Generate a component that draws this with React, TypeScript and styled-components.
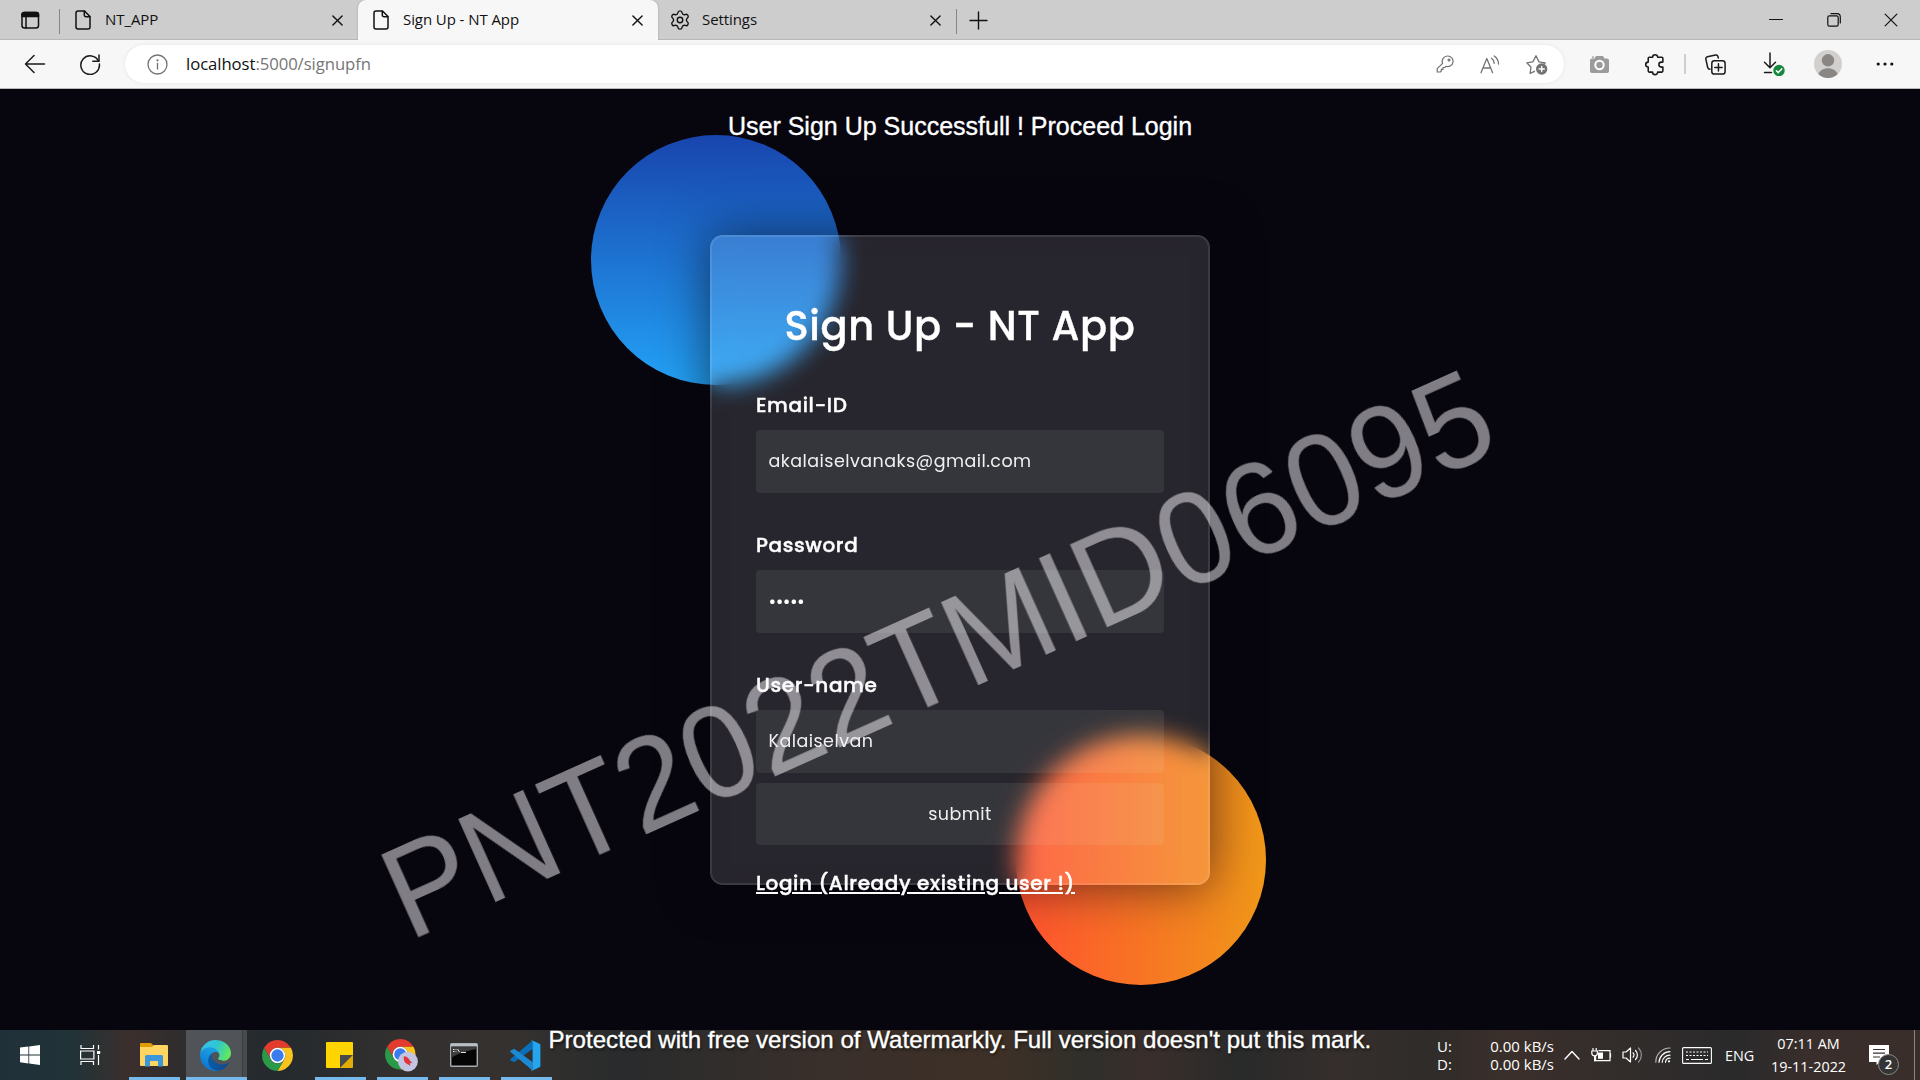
import React from "react";
import styled, { createGlobalStyle, css } from "styled-components";
import { Settings } from "lucide-react";

const uiFont = `"Segoe UI", "Open Sans", "Noto Sans", sans-serif`;
const formFont = `Poppins, Inter, "Open Sans", sans-serif`;
const plainFont = `"Liberation Sans", Arial, sans-serif`;

const GlobalStyle = createGlobalStyle`
  *, *::before, *::after { box-sizing: border-box; }
  body { margin: 0; background: #07050e; overflow: hidden; }
  svg { display: block; flex: none; }
  button { border: 0; padding: 0; background: none; color: inherit; font: inherit; }
`;

const Screen = styled.div`
  position: relative;
  display: grid;
  grid-template-rows: 89px 941px 50px;
  width: 1920px;
  height: 1080px;
  overflow: hidden;
  font-family: ${uiFont};
`;

/* ---------- Browser chrome ---------- */

const BrowserChrome = styled.header`
  display: grid;
  grid-template-rows: 40px 48px;
  background: #f7f7f7;
  border-bottom: 1px solid #b9bab9;
`;

const TabStrip = styled.div`
  display: flex;
  background: #cdcdcd;
  box-shadow: inset 0 -1px #b8b8b8;
  color: #111;
`;

const TabActions = styled.button`
  display: flex;
  align-items: center;
  width: 59px;
  padding-left: 20px;
`;

const StripDivider = styled.span`
  align-self: center;
  width: 1px;
  height: 25px;
  margin-top: 2px;
  background: #858585;
`;

const Tab = styled.div<{ $width: number; $active?: boolean; $start?: number }>`
  display: flex;
  align-items: center;
  width: ${(p) => p.$width}px;
  padding: 0 15px 0 ${(p) => p.$start ?? 15}px;
  ${(p) =>
    p.$active &&
    css`
      background: #f7f7f7;
      border-radius: 8px 8px 0 0;
      box-shadow: 0 0 2px rgba(0, 0, 0, 0.25);
      clip-path: inset(0 -3px 0 -3px);
    `}
`;

const TabTitle = styled.span<{ $gap?: number }>`
  flex: 1;
  margin-left: ${(p) => p.$gap ?? 14}px;
  padding-bottom: 2px;
  font-size: 15px;
  letter-spacing: -0.08px;
  line-height: 30px;
  white-space: nowrap;
`;

const NewTab = styled.button`
  display: flex;
  align-items: center;
  margin-left: 12px;
`;

const WindowButtons = styled.div`
  display: flex;
  align-items: center;
  justify-content: space-between;
  width: 129px;
  margin-left: auto;
  margin-right: 22px;
`;

const Toolbar = styled.div`
  display: flex;
  align-items: center;
  padding: 0 25px 0 24px;
  color: #1b1b1b;
`;

const Reload = styled.button`
  margin: 0 24px 0 33px;
`;

const AddressBar = styled.div`
  display: flex;
  align-items: center;
  width: 1439px;
  height: 38px;
  padding: 0 16px 0 22px;
  border-radius: 19px;
  background: #fff;
  box-shadow: 0 0 4px rgba(0, 0, 0, 0.08);
  color: #737373;
`;

const Url = styled.span`
  flex: 1;
  margin-left: 18px;
  padding-bottom: 2px;
  font-size: 16.7px;
  letter-spacing: -0.06px;
  color: #767676;
`;

const Host = styled.span`
  color: #111;
`;

const AddressActions = styled.div`
  display: flex;
  align-items: center;
  gap: 26px;
`;

const ToolbarAction = styled.button<{ $gap: number }>`
  margin-left: ${(p) => p.$gap}px;
`;

const ToolbarDivider = styled.span`
  width: 2px;
  height: 20px;
  margin-left: 18px;
  background: #cfcfcf;
`;

/* ---------- Sign-up page ---------- */

const Page = styled.main`
  position: relative;
  display: flex;
  flex-direction: column;
  align-items: center;
  padding-top: 22px;
  background: #07050e;
`;

const Message = styled.p`
  position: relative;
  z-index: 2;
  margin: 0;
  font: 25px/30px ${plainFont};
  color: #fff;
  -webkit-text-stroke: 0.35px #fff;
`;

const Shapes = styled.div`
  position: absolute;
  top: 146px;
  left: 691px;
  width: 538px;
  height: 650px;
`;

const Shape = styled.span<{ $variant: "blue" | "orange" }>`
  position: absolute;
  width: 250px;
  height: 250px;
  border-radius: 50%;
  ${(p) =>
    p.$variant === "blue"
      ? css`
          top: -100px;
          left: -100px;
          background: linear-gradient(#1845ad, #23a2f6);
        `
      : css`
          right: -37px;
          bottom: -100px;
          background: linear-gradient(to right, #ff512f, #f09819);
        `}
`;

const Form = styled.form`
  position: relative;
  display: flex;
  flex-direction: column;
  width: 500px;
  height: 650px;
  margin-top: 94px;
  padding: 63px 44px 0;
  border: 2px solid rgba(255, 255, 255, 0.1);
  border-radius: 12.5px;
  background-color: rgba(255, 255, 255, 0.13);
  backdrop-filter: blur(12.5px);
  box-shadow: 0 0 50px rgba(7, 5, 14, 0.6);
  font-family: ${formFont};
  letter-spacing: 0.625px;
  color: #fff;

  > * {
    flex-shrink: 0;
  }
`;

const Title = styled.h3`
  margin: 0 0 1px;
  font-size: 40px;
  font-weight: 500;
  line-height: 52px;
  text-align: center;
  white-space: nowrap;
  -webkit-text-stroke: 0.4px #fff;
`;

const Label = styled.label`
  margin: 37px 0 10px;
  font-size: 20px;
  font-weight: 500;
  line-height: 30px;
  -webkit-text-stroke: 0.4px #fff;
`;

const Field = styled.div<{ $masked?: boolean }>`
  display: flex;
  align-items: center;
  height: 63px;
  padding: 0 12.5px 2px;
  border-radius: 4px;
  background: rgba(235, 255, 235, 0.08);
  font-size: 17.5px;
  letter-spacing: 0.45px;
  color: #f0f0f1;
  ${(p) =>
    p.$masked &&
    css`
      padding-bottom: 1px;
      font-size: 16px;
      font-weight: 600;
      letter-spacing: -0.55px;
      color: #fff;
    `}
`;

const Submit = styled.button`
  height: 62px;
  margin-top: 10px;
  padding-bottom: 1px;
  border-radius: 4px;
  background: rgba(235, 255, 235, 0.08);
  font-size: 17.5px;
  letter-spacing: 0.45px;
  color: #f0f0f1;
`;

const LoginLink = styled.a`
  align-self: flex-start;
  margin-top: 23px;
  font-size: 20px;
  font-weight: 500;
  line-height: 30px;
  text-decoration: underline;
  text-decoration-thickness: 2px;
  text-underline-offset: 2px;
  white-space: nowrap;
  -webkit-text-stroke: 0.4px #fff;
`;

/* ---------- Watermarks ---------- */

const Watermark = styled.div`
  position: absolute;
  z-index: 3;
  top: 834px;
  left: 408.5px;
  font: 127px/127px ${plainFont};
  color: rgba(248, 246, 250, 0.5);
  white-space: nowrap;
  transform: rotate(-24.19deg) scaleY(1.035);
  transform-origin: 0 107.5px;
  pointer-events: none;
`;

const ProtectedNote = styled.div`
  position: absolute;
  z-index: 3;
  top: 1026px;
  left: 548.5px;
  font: 24.1px/28px ${plainFont};
  color: #fff;
  -webkit-text-stroke: 0.35px #fff;
  text-shadow: 1px 2px 3px rgba(0, 0, 0, 0.6);
  white-space: nowrap;
`;

/* ---------- Taskbar ---------- */

const Taskbar = styled.footer`
  display: flex;
  background: linear-gradient(
    to right,
    #20303a 0, #203337 70px, #3b2f2d 130px, #2b2c2e 200px, #242a2e 280px,
    #33302f 400px, #34312f 520px, #292b2c 620px, #392f2b 820px, #3d3026 1000px,
    #302f2b 1090px, #3a2e2b 1150px, #292a2a 1240px, #352e2c 1340px, #2f2c29 1430px,
    #3b2f2b 1510px, #322d2b 1620px, #2a2a2b 1740px, #392e2b 1810px, #3a2e2b 1920px
  );
  color: #fff;
`;

const SystemButton = styled.button`
  display: grid;
  place-items: center;
  width: 60px;
`;

const AppList = styled.div`
  display: flex;
  margin-left: 3px;
`;

const AppButton = styled.button<{ $open?: boolean; $active?: boolean }>`
  display: grid;
  place-items: center;
  width: 62px;
  padding-right: 1px;
  background: ${(p) =>
    p.$active
      ? `linear-gradient(#76b9ed, #76b9ed) 1px 47px / 61px 3px no-repeat,
         linear-gradient(to right, transparent 1px, #505357 1px, #505357 57px, #3a3c3d 57px, #3a3c3d 58px, #484a4c 58px)`
      : p.$open
      ? "linear-gradient(#76b9ed, #76b9ed) 6px 47px / 51px 3px no-repeat"
      : "none"};
`;

const Tray = styled.div`
  display: flex;
  align-items: center;
  width: 483px;
  margin-left: auto;
`;

const NetStats = styled.div`
  display: grid;
  grid-template-columns: auto auto;
  justify-content: space-between;
  width: 117px;
  font-size: 15px;
  line-height: 18px;
`;

const TrayItem = styled.span<{ $gap: number }>`
  display: flex;
  margin-left: ${(p) => p.$gap}px;
`;

const Language = styled.span`
  width: 30px;
  margin-left: 13px;
  font-size: 14.4px;
`;

const Clock = styled.div`
  width: 75px;
  margin-left: 16px;
  font-size: 14.4px;
  line-height: 23px;
  text-align: center;
  white-space: nowrap;
`;

const ShowDesktop = styled.span`
  align-self: stretch;
  width: 1px;
  margin-left: 15px;
  background: #8b8583;
`;

const Notice = styled.span`
  position: relative;
  width: 30px;
  height: 31px;
  margin: 11px 0 0 23px;
`;

const NoticeCount = styled.span`
  position: absolute;
  left: 9px;
  top: 9px;
  display: grid;
  place-items: center;
  width: 21px;
  height: 21px;
  border: 1px solid #8e8c8c;
  border-radius: 50%;
  background: #343434;
  font-size: 13px;
  font-weight: 600;
  line-height: 1;
`;

/* ---------- Icons ---------- */

const Line = ({ w, h, box, sw = 1.5, children }: { w: number; h: number; box?: string; sw?: number; children: React.ReactNode }) => (
  <svg width={w} height={h} viewBox={box ?? `0 0 ${w} ${h}`} fill="none" stroke="currentColor" strokeWidth={sw} strokeLinecap="round" strokeLinejoin="round">
    {children}
  </svg>
);

const TabActionsIcon = () => (
  <Line w={20} h={20}>
    <rect x="2" y="2.5" width="16.5" height="15.5" rx="2.5" />
    <path d="M2 4.5a2 2 0 0 1 2-2h12.5a2 2 0 0 1 2 2V6.5H2z" fill="currentColor" />
    <path d="M6 6v12" />
  </Line>
);
const PageIcon = () => (
  <Line w={16} h={20}>
    <path d="M3 1h6.5L15 6.5V17a2 2 0 0 1-2 2H3a2 2 0 0 1-2-2V3a2 2 0 0 1 2-2z" />
    <path d="M9.3 1.2V5a1.7 1.7 0 0 0 1.7 1.7h3.8" />
  </Line>
);
const CloseIcon = ({ size = 11, sw = 1.4 }) => (
  <Line w={size} h={size} box="0 0 11 11" sw={sw}>
    <path d="M.9.9l9.2 9.2M10.1.9L.9 10.1" />
  </Line>
);
const PlusIcon = () => (
  <Line w={19} h={19} sw={1.4}><path d="M9.5 1v17M1 9.5h17" /></Line>
);
const MinimizeIcon = () => (
  <Line w={14} h={14} sw={1.1}><path d="M.5 6.5h13" /></Line>
);
const RestoreIcon = () => (
  <Line w={14} h={14} sw={1.2}>
    <rect x=".8" y="2.8" width="10.4" height="10.4" rx="1.6" />
    <path d="M4 .7h6a3.3 3.3 0 0 1 3.3 3.3v6" />
  </Line>
);
const BackIcon = () => (
  <Line w={22} h={20}><path d="M20.5 10h-19M10 1.5L1.5 10l8.5 8.5" /></Line>
);
const ReloadIcon = () => (
  <Line w={22} h={22}>
    <path d="M19.6 8.2A9.3 9.3 0 1 0 20.4 11" />
    <path d="M20 2v6.2h-6.2" />
  </Line>
);
const InfoIcon = () => (
  <Line w={21} h={21} sw={1.3}>
    <circle cx="10.5" cy="10.5" r="9.5" />
    <path d="M10.5 9.5v5.6" />
    <circle cx="10.5" cy="6.3" r=".5" fill="currentColor" />
  </Line>
);
const KeyIcon = () => (
  <Line w={18} h={18} sw={1.2}>
    <path d="M11.6 1a5.3 5.3 0 1 1-1.6 10.3L8.8 12.5H7v1.8H5.3V16l-1 1H1.2v-3.3l5.4-5.4A5.3 5.3 0 0 1 11.6 1z" />
    <circle cx="13" cy="5" r=".9" />
  </Line>
);
const ReadAloudIcon = () => (
  <Line w={20} h={19} sw={1.3}>
    <path d="M1 17.7L6.8 3.5l5.8 14.2M3 13h7.6" />
    <path d="M11.5 3.3c1.7 1.2 2.6 3 2.7 5M14.2 1c2.7 1.8 4.2 4.6 4.4 8" />
  </Line>
);
const FavoriteIcon = () => (
  <Line w={22} h={21} sw={1.3}>
    <path d="M8.5 17.3l-4.4 2.2.9-6.3L.8 8.8l6-.9L10 1.8l3 6.1 6.3.9-1.8 1.6" />
    <circle cx="15.7" cy="15" r="5.7" fill="currentColor" stroke="none" />
    <path d="M15.7 12.4v5.2M13.1 15h5.2" stroke="#fff" />
  </Line>
);
const CameraIcon = () => (
  <svg width="19" height="18" viewBox="0 0 19 18">
    <path d="M2 3.5h2.5L6 1h7l1.5 2.5H17a2 2 0 0 1 2 2V16a2 2 0 0 1-2 2H2a2 2 0 0 1-2-2V5.5a2 2 0 0 1 2-2zM2 1.5h2v1.2H2z" fill="#9b9b9b" />
    <circle cx="9.5" cy="10" r="4.2" fill="none" stroke="#fff" strokeWidth="2" />
    <circle cx="9.5" cy="10" r="2.2" fill="#9b9b9b" />
  </svg>
);
const PuzzleIcon = () => (
  <Line w={23} h={23} box="1 1 22 22" sw={1.5}>
    <path d="M7 5h3.2a2.4 2.4 0 0 1 4.8 0H19a1 1 0 0 1 1 1v3.7h-1.4a2.4 2.4 0 0 0 0 4.8H20V18.3a1 1 0 0 1-1 1h-4a2.4 2.4 0 0 1-4.8 0H7a1 1 0 0 1-1-1v-3.8a2.4 2.4 0 0 1 0-4.8V6a1 1 0 0 1 1-1z" />
  </Line>
);
const CollectionsIcon = () => (
  <Line w={21} h={21}>
    <path d="M5 15.2c-1.2 0-2-.6-2.3-1.7L.9 5.4c-.3-1.3.3-2.3 1.5-2.6L10.500 1c1.300-.2 2.200.4 2.500 1.600l.3 1.300" />
    <rect x="6.8" y="6.8" width="13.3" height="13.3" rx="2.6" />
    <path d="M13.450 9.800v7.300M9.800 13.450h7.300" />
  </Line>
);
const DownloadIcon = () => (
  <Line w={22} h={24}>
    <path d="M7 1v14.5M1.5 10.2L7 15.7l5.5-5.5M1.5 20.5h7" />
    <circle cx="16" cy="18.5" r="5.7" fill="#15883e" stroke="none" />
    <path d="M13.4 18.7l1.9 1.9 3.4-3.7" stroke="#fff" />
  </Line>
);
const AvatarIcon = () => (
  <svg width="28" height="28" viewBox="0 0 28 28">
    <circle cx="14" cy="14" r="14" fill="#d2d0ce" />
    <circle cx="14" cy="10.3" r="6.2" fill="#8a8684" />
    <path d="M4.3 24a14 14 0 0 0 19.4 0c-1.5-3.6-5.2-5.8-9.7-5.8S5.8 20.4 4.3 24z" fill="#8a8684" />
  </svg>
);
const DotsIcon = () => (
  <svg width="18" height="6" viewBox="0 0 18 6" fill="#111">
    <circle cx="2.2" cy="3" r="1.6" /><circle cx="9" cy="3" r="1.6" /><circle cx="15.8" cy="3" r="1.6" />
  </svg>
);
const WindowsIcon = () => (
  <svg width="20" height="20" viewBox="0 0 20 20" fill="#fff">
    <path d="M0 2.6l8.4-1.1v8H0zM9.2 1.4L20 0v9.5H9.2zM0 10.4h8.4v8L0 17.3zM9.2 10.4H20V20L9.2 18.5z" />
  </svg>
);
const TaskViewIcon = () => (
  <svg width="21" height="20" viewBox="0 0 21 20" fill="none" stroke="#fff" strokeWidth="1.2">
    <path d="M1 0v3.5h12.5V0M1 20v-3.5h12.5V20M.6 6h13.3v8H.6zM18.5 0v4.5M18.5 10v10" />
    <path d="M17 6h3.2v3H17z" fill="#fff" stroke="none" />
  </svg>
);
const ExplorerIcon = () => (
  <svg width="28" height="24" viewBox="0 0 28 24">
    <path d="M0 1a1 1 0 0 1 1-1h10l2.5 2.5V6H0z" fill="#e19b04" />
    <path d="M0 4h12l2-2h13a1 1 0 0 1 1 1v19a1 1 0 0 1-1 1H1a1 1 0 0 1-1-1z" fill="#ffd561" />
    <path d="M5 23.5v-10a1.5 1.5 0 0 1 1.5-1.5h15a1.5 1.5 0 0 1 1.5 1.5v10h-5v-5.5h-8v5.5z" fill="#3b97dc" />
  </svg>
);
const EdgeIcon = () => (
  <svg width="31" height="31" viewBox="0 0 256 256">
    <defs>
      <linearGradient id="edgeNavy" x1=".2" y1=".6" x2="1" y2=".7"><stop offset="0" stopColor="#0c59a4" /><stop offset="1" stopColor="#114a8b" /></linearGradient>
      <linearGradient id="edgeBlue" x1=".6" y1=".2" x2=".3" y2="1"><stop offset="0" stopColor="#1b9de2" /><stop offset="1" stopColor="#0c6fcd" /></linearGradient>
      <linearGradient id="edgeGreen" x1="0" y1=".3" x2="1" y2=".6"><stop offset="0" stopColor="#35c1f1" /><stop offset=".5" stopColor="#2fc6d0" /><stop offset="1" stopColor="#66eb55" /></linearGradient>
    </defs>
    <path fill="url(#edgeNavy)" d="M231.07 190.54c-3.4 1.8-6.9 3.37-10.51 4.72a101.9 101.9 0 0 1-35.87 6.46c-47.2 0-88.33-32.48-88.33-74.15a31.4 31.4 0 0 1 16.4-27.28c-42.71 1.79-53.69 46.29-53.69 72.35 0 73.69 67.92 81.16 82.55 81.16 7.89 0 19.78-2.3 26.92-4.55l1.3-.44A128.3 128.3 0 0 0 235.9 195.2a3.4 3.4 0 0 0-4.83-4.66z" />
    <path fill="url(#edgeBlue)" d="M105.73 241.42a79.2 79.2 0 0 1-22.74-21.34 80.72 80.72 0 0 1 29.77-119.79c3.12-1.47 8.45-4.13 15.54-4a32.35 32.35 0 0 1 25.69 13 31.9 31.9 0 0 1 6.36 18.66c0-.21 24.46-79.6-80-79.6-43.9 0-80 41.66-80 78.21a130.15 130.15 0 0 0 12.11 56 128 128 0 0 0 156.38 67.11 75.55 75.55 0 0 1-62.78-8z" />
    <path fill="url(#edgeGreen)" d="M152.33 148.86c-.81 1.05-3.3 2.5-3.3 5.66 0 2.61 1.7 5.12 4.72 7.23 14.38 10 41.49 8.68 41.56 8.68a59.6 59.6 0 0 0 30.27-8.35 61.4 61.4 0 0 0 30.43-52.88c.26-22.41-8-37.31-11.34-43.91C223.46 23.84 177.72 0 128 0A128 128 0 0 0 0 126.2c.48-36.54 36.8-66.05 80-66.05 3.5 0 23.46.34 42 10.07 16.34 8.58 24.9 18.94 30.85 29.21 6.18 10.67 7.28 24.15 7.28 29.52s-2.74 13.33-7.8 19.91z" />
  </svg>
);
const ChromeIcon = ({ badge }: { badge?: boolean }) => (
  <svg width={badge ? 33 : 31} height={badge ? 33 : 31} viewBox={badge ? "2 2 47.5 47.5" : "2 2 44 44"}>
    <path d="M4.95 13A22 22 0 0 1 43.05 13H24a11 11 0 0 0-9.53 16.5z" fill="#e33b2e" />
    <path d="M43.05 13A22 22 0 0 1 24 46l9.53-16.5A11 11 0 0 0 24 13z" fill="#fcc31e" />
    <path d="M24 46A22 22 0 0 1 4.95 13l9.52 16.5a11 11 0 0 0 19.06 0z" fill="#2a9a48" />
    <circle cx="24" cy="24" r="11" fill="#fff" />
    <circle cx="24" cy="24" r="8.7" fill="#3a7ceb" />
    {badge && (
      <>
        <circle cx="35" cy="34.5" r="14.3" fill="#c3c6e2" />
        <path d="M29 27c4 0 6.500 2 8 5l4.500 5-3.500-.3.3 3.800-5-2.700c-3.500-2-4.800-5.300-4.300-10.800z" fill="#e2343b" />
      </>
    )}
  </svg>
);
const StickyIcon = () => (
  <svg width="27" height="26" viewBox="0 0 27 26">
    <path d="M1 0h25a1 1 0 0 1 1 1v12L14 26H1a1 1 0 0 1-1-1V1a1 1 0 0 1 1-1z" fill="#ffd400" />
    <path d="M14 13h13L14 26z" fill="#4a4a48" />
    <path d="M27 13v12a1 1 0 0 1-1 1H14z" fill="#e3ad05" />
  </svg>
);
const TerminalIcon = () => (
  <svg width="28" height="24" viewBox="0 0 28 24">
    <rect x=".7" y=".7" width="26.6" height="22.6" rx="1" fill="#050505" stroke="#a8adb2" strokeWidth="1.4" />
    <path d="M1 1h26v2.5H1z" fill="#b9c0c6" />
    <path d="M1.4 4h25v2C16 8 6 11 1.4 15z" fill="#3c3c3c" />
    <path d="M3 6.5h1.5M3 8.5h1.5M6 6.2v.8M6 8.3v.8M7.5 6l2 3M11 9.5h5" stroke="#e4e4e4" strokeWidth="1" />
  </svg>
);
const CodeIcon = () => (
  <svg width="31" height="31" viewBox="0 0 31 31">
    <path d="M22.5.5L22.8 8.8 4.2 22.3 .8 20.5a1 1 0 0 1 0-1.7z" fill="#0a6fb8" />
    <path d="M22.5 30.5l.3-8.3L4.2 8.7.8 10.5a1 1 0 0 0 0 1.7z" fill="#1b8ad2" />
    <path d="M22.5.5l7 3.2a1.5 1.5 0 0 1 .9 1.4v20.8a1.5 1.5 0 0 1-.9 1.4l-7 3.2a1.4 1.4 0 0 1-1.7-.8c.7.5 1.8 0 1.8-1V2.3c0-1-1.1-1.5-1.8-1 .3-.7 1-1 1.7-.8z" fill="#25a5f0" />
  </svg>
);
const ChevronIcon = () => (
  <Line w={16} h={10} sw={1.4}><path d="M1 9l7-7.5L15 9" /></Line>
);
const BatteryIcon = () => (
  <svg width="21" height="14" viewBox="0 0 21 14" fill="none" stroke="#fff" strokeWidth="1.2">
    <path d="M7.5 2.6H19v10H4.6V8M19.5 5.5v4" />
    <path d="M7 4.5h5v6.3H7z" fill="#fff" stroke="none" />
    <path d="M2 0v2.5M5.2 0v2.5M.8 3h5.6v2A2.8 2.8 0 0 1 .8 5zM3.6 7.5v6" />
  </svg>
);
const SpeakerIcon = () => (
  <Line w={21} h={18} sw={1.2}>
    <path d="M1 6h3l4.5-4v14L4 12H1z" />
    <path d="M11 6.8a3 3 0 0 1 0 4.4M13.5 4.5a6.3 6.3 0 0 1 0 9" />
    <path d="M16.5 2a10 10 0 0 1 0 14" opacity=".5" />
  </Line>
);
const WifiIcon = () => (
  <Line w={16} h={16} sw={1.2}>
    <path d="M.8 15.2A14 14 0 0 1 15 1" opacity=".65" />
    <path d="M4 15.2A11 11 0 0 1 15 4.7M7.2 15.2A7.6 7.6 0 0 1 15 8.2M10.5 15.2a4.5 4.5 0 0 1 4.5-4" />
    <circle cx="14" cy="14.3" r="1.1" fill="#fff" stroke="none" />
  </Line>
);
const KeyboardIcon = () => (
  <svg width="30" height="17" viewBox="0 0 30 17" fill="none" stroke="#fff" strokeWidth="1.1">
    <rect x=".6" y=".6" width="28.8" height="15.8" rx="1" />
    <path d="M4 5h22M4 8.5h22" strokeDasharray="2 1.5" />
    <path d="M4 12.5h3M9 12.5h12M23 12.5h3" />
  </svg>
);
const NoticeIcon = () => (
  <svg width="20" height="20" viewBox="0 0 20 20">
    <path d="M0 0h20v17h-9l-3.5 3v-3H0z" fill="#fff" />
    <path d="M4 4.5h12M4 8.2h12M4 12h7" stroke="#3a3331" strokeWidth="1.2" />
  </svg>
);

const windowTabs = [
  { title: "NT_APP", width: 298, icon: <PageIcon /> },
  { title: "Sign Up - NT App", width: 300, icon: <PageIcon />, active: true },
  { title: "Settings", width: 298, icon: <Settings size={22} strokeWidth={1.5} />, start: 11, gap: 11 },
];

const apps = [
  { name: "explorer", icon: <ExplorerIcon />, open: true },
  { name: "edge", icon: <EdgeIcon />, open: true, active: true },
  { name: "chrome", icon: <ChromeIcon /> },
  { name: "notes", icon: <StickyIcon />, open: true },
  { name: "chrome-profile", icon: <ChromeIcon badge />, open: true },
  { name: "terminal", icon: <TerminalIcon />, open: true },
  { name: "code", icon: <CodeIcon />, open: true },
];

export default function App() {
  return (
    <>
      <GlobalStyle />
      <Screen>
        <BrowserChrome>
          <TabStrip>
            <TabActions><TabActionsIcon /></TabActions>
            <StripDivider />
            {windowTabs.map((t) => (
              <Tab key={t.title} $width={t.width} $active={t.active} $start={t.start}>
                {t.icon}
                <TabTitle $gap={t.gap}>{t.title}</TabTitle>
                <CloseIcon />
              </Tab>
            ))}
            <StripDivider />
            <NewTab><PlusIcon /></NewTab>
            <WindowButtons>
              <MinimizeIcon />
              <RestoreIcon />
              <CloseIcon size={14} sw={0.95} />
            </WindowButtons>
          </TabStrip>
          <Toolbar>
            <BackIcon />
            <Reload><ReloadIcon /></Reload>
            <AddressBar>
              <InfoIcon />
              <Url><Host>localhost</Host>:5000/signupfn</Url>
              <AddressActions>
                <KeyIcon />
                <ReadAloudIcon />
                <FavoriteIcon />
              </AddressActions>
            </AddressBar>
            <ToolbarAction $gap={26}><CameraIcon /></ToolbarAction>
            <ToolbarAction $gap={34}><PuzzleIcon /></ToolbarAction>
            <ToolbarDivider />
            <ToolbarAction $gap={19}><CollectionsIcon /></ToolbarAction>
            <ToolbarAction $gap={37}><DownloadIcon /></ToolbarAction>
            <ToolbarAction $gap={29}><AvatarIcon /></ToolbarAction>
            <ToolbarAction $gap={34}><DotsIcon /></ToolbarAction>
          </Toolbar>
        </BrowserChrome>

        <Page>
          <Shapes>
            <Shape $variant="blue" />
            <Shape $variant="orange" />
          </Shapes>
          <Message>User Sign Up Successfull ! Proceed Login</Message>
          <Form>
            <Title>Sign Up - NT App</Title>
            <Label>Email-ID</Label>
            <Field>akalaiselvanaks@gmail.com</Field>
            <Label>Password</Label>
            <Field $masked>•••••</Field>
            <Label>User-name</Label>
            <Field>Kalaiselvan</Field>
            <Submit type="button">submit</Submit>
            <LoginLink>Login (Already existing user !)</LoginLink>
          </Form>
        </Page>

        <Taskbar>
          <SystemButton><WindowsIcon /></SystemButton>
          <SystemButton><TaskViewIcon /></SystemButton>
          <AppList>
            {apps.map((a) => (
              <AppButton key={a.name} $open={a.open} $active={a.active}>{a.icon}</AppButton>
            ))}
          </AppList>
          <Tray>
            <NetStats>
              <span>U:</span><span>0.00 kB/s</span>
              <span>D:</span><span>0.00 kB/s</span>
            </NetStats>
            <TrayItem $gap={10}><ChevronIcon /></TrayItem>
            <TrayItem $gap={11}><BatteryIcon /></TrayItem>
            <TrayItem $gap={10}><SpeakerIcon /></TrayItem>
            <TrayItem $gap={12}><WifiIcon /></TrayItem>
            <TrayItem $gap={11}><KeyboardIcon /></TrayItem>
            <Language>ENG</Language>
            <Clock>07:11 AM<br />19-11-2022</Clock>
            <Notice>
              <NoticeIcon />
              <NoticeCount>2</NoticeCount>
            </Notice>
            <ShowDesktop />
          </Tray>
        </Taskbar>

        <Watermark>PNT2022TMID06095</Watermark>
        <ProtectedNote>Protected with free version of Watermarkly. Full version doesn't put this mark.</ProtectedNote>
      </Screen>
    </>
  );
}
